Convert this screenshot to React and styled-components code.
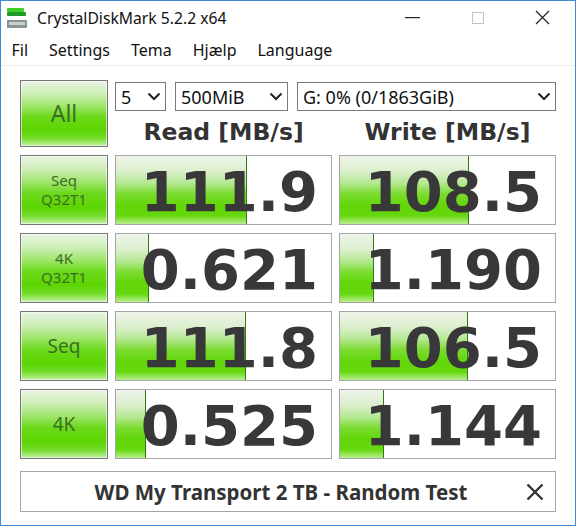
import React from "react";
import styled, { createGlobalStyle } from "styled-components";

const GlobalStyle = createGlobalStyle`
  html, body {
    margin: 0;
    padding: 0;
    background: #ffffff;
  }
`;

const results = [
  { label: ["Seq", "Q32T1"], read: "111.9", readFill: 131, write: "108.5", writeFill: 129 },
  { label: ["4K", "Q32T1"], read: "0.621", readFill: 33, write: "1.190", writeFill: 34 },
  { label: ["Seq"], read: "111.8", readFill: 130, write: "106.5", writeFill: 128 },
  { label: ["4K"], read: "0.525", readFill: 30, write: "1.144", writeFill: 44 },
];

const Window = styled.div`
  width: 576px;
  height: 526px;
  box-sizing: border-box;
  border: 1px solid #3d8ad6;
  background: #ffffff;
  display: flex;
  flex-direction: column;
  font-family: "Noto Sans", sans-serif;
  color: #1a1a1a;
`;

const TitleBar = styled.div`
  height: 33px;
  display: flex;
  align-items: center;
`;

const AppIcon = styled.svg`
  margin-left: 5px;
  flex: none;
`;

const Title = styled.span`
  margin-left: 9px;
  font-size: 15.7px;
  color: #111;
`;

const Controls = styled.div`
  margin-left: auto;
  display: flex;
  height: 100%;
`;

const Control = styled.div`
  width: 65px;
  display: flex;
  align-items: center;
  justify-content: center;
`;

const MenuBar = styled.div`
  height: 31px;
  display: flex;
  align-items: center;
  border-bottom: 1px solid #ededed;
`;

const MenuItem = styled.span`
  padding: 0 10.5px;
  font-size: 16px;
  color: #111;
`;

const Board = styled.div`
  padding: 14px 0 0 19px;
  display: grid;
  grid-template-columns: 88px 217px 217px;
  grid-template-rows: 67px repeat(4, 70px) 45px;
  column-gap: 7px;
  row-gap: 8px;
`;

const GreenButton = styled.div`
  box-sizing: border-box;
  border: 1px solid #747474;
  box-shadow: inset 0 0 0 1px rgba(255, 255, 255, 0.55);
  background: linear-gradient(
    to bottom,
    #e9f3e3 0%,
    #cdeeb6 20%,
    #9be465 40%,
    #6cd91c 55%,
    #5cd500 75%,
    #74dc2a 88%,
    #c6f1a6 100%
  );
  display: flex;
  flex-direction: column;
  align-items: center;
  justify-content: center;
  font-family: "Comic Sans MS", "Noto Sans", sans-serif;
  color: #3b6e22;
  font-size: ${(p) => (p.$big ? "23px" : p.$single ? "19px" : "15px")};
  line-height: ${(p) => (p.$single ? "1" : "1.3")};
`;

const TopRight = styled.div`
  grid-column: 2 / 4;
  display: flex;
  flex-direction: column;
`;

const Selects = styled.div`
  margin-top: 2px;
  height: 29px;
  display: flex;
  gap: 9px;
`;

const Select = styled.div`
  box-sizing: border-box;
  width: ${(p) => p.$w}px;
  border: 1px solid #7a7a7a;
  display: flex;
  align-items: center;
  justify-content: space-between;
  padding: 0 4px 0 5px;
  font-size: 18px;
  color: #111;
`;

const Headers = styled.div`
  flex: 1;
  display: grid;
  grid-template-columns: 217px 217px;
  column-gap: 7px;
  align-items: end;
`;

const Header = styled.div`
  text-align: center;
  font-family: "DejaVu Sans", sans-serif;
  font-weight: bold;
  font-size: 23.5px;
  line-height: 1;
  color: #333;
  padding-bottom: 3px;
`;

const ResultCell = styled.div`
  position: relative;
  box-sizing: border-box;
  border: 1px solid #a6a6a6;
  background: #ffffff;
  overflow: hidden;
  display: flex;
  align-items: center;
  justify-content: flex-end;
  padding: 4px 13px 0 0;
`;

const Meter = styled.div`
  position: absolute;
  left: 0;
  top: 0;
  bottom: 0;
  box-sizing: border-box;
  border-right: 1px solid #2f7d12;
  background: linear-gradient(
    to bottom,
    #eef4ea 0%,
    #dcefce 22%,
    #b5e892 40%,
    #7ddc34 55%,
    #62d608 72%,
    #66d80e 88%,
    #b9ee92 100%
  );
`;

const Value = styled.span`
  position: relative;
  font-family: "DejaVu Sans", sans-serif;
  font-weight: bold;
  font-size: 56px;
  line-height: 1;
  color: #38383a;
`;

const Comment = styled.div`
  grid-column: 1 / 4;
  align-self: end;
  height: 41px;
  box-sizing: border-box;
  border: 1px solid #a6a6a6;
  display: flex;
  align-items: center;
`;

const CommentText = styled.span`
  flex: 1;
  margin-left: 26px;
  text-align: center;
  font-weight: bold;
  font-size: 20.5px;
  color: #333;
`;

const ClearButton = styled.div`
  width: 40px;
  display: flex;
  justify-content: center;
`;

function Chevron() {
  return (
    <svg width="14" height="9" viewBox="0 0 14 9">
      <polyline points="1.5,1.5 7,7 12.5,1.5" fill="none" stroke="#222" strokeWidth="2" />
    </svg>
  );
}

function App() {
  return (
    <>
      <GlobalStyle />
      <Window>
        <TitleBar>
          <AppIcon width="22" height="22" viewBox="0 0 22 22">
            <rect x="1" y="1" width="17" height="4" rx="1" fill="#3fcf2a" />
            <rect x="1" y="5" width="19" height="4" rx="1" fill="#1f9a2a" />
            <rect x="1" y="13" width="20" height="8" rx="1" fill="#8b9597" />
            <rect x="3" y="15" width="16" height="3" fill="#c9d0d2" />
          </AppIcon>
          <Title>CrystalDiskMark 5.2.2 x64</Title>
          <Controls>
            <Control>
              <svg width="15" height="2" viewBox="0 0 15 2">
                <rect x="0" y="0" width="15" height="1.2" fill="#222" />
              </svg>
            </Control>
            <Control>
              <svg width="12" height="12" viewBox="0 0 12 12">
                <rect x="0.5" y="0.5" width="11" height="11" fill="none" stroke="#c4c4c4" />
              </svg>
            </Control>
            <Control>
              <svg width="15" height="15" viewBox="0 0 15 15">
                <path d="M1 1 L14 14 M14 1 L1 14" stroke="#222" strokeWidth="1.2" />
              </svg>
            </Control>
          </Controls>
        </TitleBar>
        <MenuBar>
          <MenuItem>Fil</MenuItem>
          <MenuItem>Settings</MenuItem>
          <MenuItem>Tema</MenuItem>
          <MenuItem>Hjælp</MenuItem>
          <MenuItem>Language</MenuItem>
        </MenuBar>
        <Board>
          <GreenButton $big>All</GreenButton>
          <TopRight>
            <Selects>
              <Select $w={51}>
                <span>5</span>
                <Chevron />
              </Select>
              <Select $w={113}>
                <span>500MiB</span>
                <Chevron />
              </Select>
              <Select $w={259}>
                <span>G: 0% (0/1863GiB)</span>
                <Chevron />
              </Select>
            </Selects>
            <Headers>
              <Header>Read [MB/s]</Header>
              <Header>Write [MB/s]</Header>
            </Headers>
          </TopRight>
          {results.map((r) => (
            <React.Fragment key={r.label.join("-")}>
              <GreenButton $single={r.label.length === 1}>
                {r.label.map((l) => (
                  <span key={l}>{l}</span>
                ))}
              </GreenButton>
              <ResultCell>
                <Meter style={{ width: `${r.readFill}px` }} />
                <Value>{r.read}</Value>
              </ResultCell>
              <ResultCell>
                <Meter style={{ width: `${r.writeFill}px` }} />
                <Value>{r.write}</Value>
              </ResultCell>
            </React.Fragment>
          ))}
          <Comment>
            <CommentText>WD My Transport 2 TB - Random Test</CommentText>
            <ClearButton>
              <svg width="18" height="18" viewBox="0 0 18 18">
                <path d="M1.5 1.5 L16.5 16.5 M16.5 1.5 L1.5 16.5" stroke="#333" strokeWidth="2.4" />
              </svg>
            </ClearButton>
          </Comment>
        </Board>
      </Window>
    </>
  );
}

export default App;
